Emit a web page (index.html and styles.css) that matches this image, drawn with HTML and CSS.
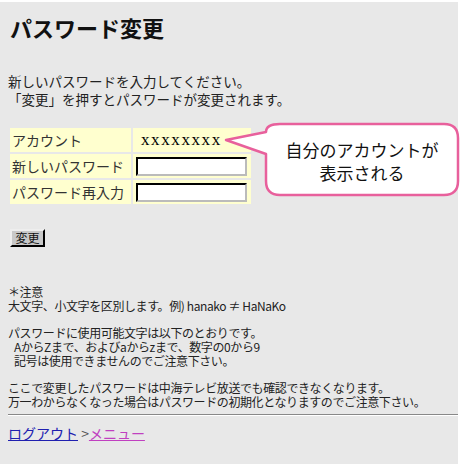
FILE: index.html
```html
<!DOCTYPE html>
<html lang="ja">
<head>
  <meta charset="UTF-8" />
  <title>パスワード変更</title>
  <link rel="stylesheet" href="styles.css">
</head>
<body>
  <div class="page">
    <h1 class="title">パスワード変更</h1>
    <p class="lead">新しいパスワードを入力してください。<br>「変更」を押すとパスワードが変更されます。</p>

    <form class="pw-form" onsubmit="return false;">
      <table class="pw-table">
        <tr>
          <td class="label">アカウント</td>
          <td class="value account">xxxxxxxx</td>
        </tr>
        <tr>
          <td class="label">新しいパスワード</td>
          <td class="value"><input class="pw-input" type="password"></td>
        </tr>
        <tr>
          <td class="label">パスワード再入力</td>
          <td class="value"><input class="pw-input" type="password"></td>
        </tr>
      </table>
      <button class="btn" type="submit">変更</button>
    </form>

    <div class="notes">
      <p>＊注意<br>大文字、小文字を区別します。例) hanako ≠ HaNaKo</p>
      <p>パスワードに使用可能文字は以下のとおりです。<br>
        <span class="indent">AからZまで、およびaからzまで、数字の0から9</span><br>
        <span class="indent">記号は使用できませんのでご注意下さい。</span></p>
      <p>ここで変更したパスワードは中海テレビ放送でも確認できなくなります。<br>万一わからなくなった場合はパスワードの初期化となりますのでご注意下さい。</p>
    </div>

    <hr class="rule">

    <div class="nav">
      <a class="link-logout" href="#">ログアウト</a> &gt;<a class="link-menu" href="#">メニュー</a>
    </div>

    <div class="callout">
      <svg class="callout-shape" width="238" height="78" viewBox="0 0 238 78">
        <path d="M2 18 L42 10 Q42 2 56 2 L220 2 Q234 2 234 16 L234 59 Q234 73 220 73 L56 73 Q42 73 42 59 L42 32 Z"
              fill="#fff" stroke="#e8609c" stroke-width="2.5" stroke-linejoin="round"/>
      </svg>
      <div class="callout-text">自分のアカウントが<br>表示される</div>
    </div>
  </div>
</body>
</html>
```

FILE: styles.css
```css
* {
    box-sizing: border-box;
}
html {
    background: #fff;
}
body {
    margin: 0;
    font-family: "Noto Sans CJK JP", "Noto Sans", sans-serif;
    color: #111;
}

.page {
    position: relative;
    width: 458px;
    height: 464px;
    margin-top: 2px;
    padding: 1px 0 0 8px;
    background: #e8e8e8;
}

.title {
    margin: 10px 0 0 2px;
    font-size: 22px;
    font-weight: bold;
    line-height: 29px;
    color: #111;
}

.lead {
    margin: 30px 0 0 0;
    font-size: 13.5px;
    line-height: 18px;
    color: #222;
}

.pw-form {
    margin-top: 18px;
}

.pw-table {
    border-spacing: 2px;
    margin-left: 0;
}
.pw-table td {
    height: 24px;
    padding: 0;
    background: #ffffcf;
    font-size: 14px;
    color: #333;
}
.label {
    width: 121px;
    padding-left: 2px !important;
}
.value {
    width: 118px;
    padding-left: 3px !important;
}
.account {
    font-family: "Liberation Serif", serif;
    font-size: 17px !important;
    letter-spacing: 1.6px;
    color: #000 !important;
    padding-left: 8px !important;
}

.pw-input {
    display: block;
    width: 111px;
    height: 19px;
    margin: 0;
    border: 2px inset #bbb;
    border-top-color: #555;
    border-left-color: #555;
    background: #fff;
}

.btn {
    display: block;
    margin: 23px 0 0 2px;
    width: 35px;
    height: 18px;
    padding: 0;
    font-family: "Noto Sans CJK JP", sans-serif;
    font-size: 12px;
    line-height: 14px;
    color: #111;
    background: #c8c8c8;
    border: 2px outset #eee;
    border-right-color: #333;
    border-bottom-color: #333;
}

.notes {
    margin-top: 38px;
    font-size: 12px;
    line-height: 14px;
    letter-spacing: -0.4px;
    color: #222;
}
.notes p {
    margin: 0 0 13px 0;
}
.notes p:last-child {
    margin-bottom: 0;
}
.indent {
    padding-left: 6px;
}

.rule {
    margin: 5px 0 0 0;
    width: 450px;
    border: none;
    border-top: 1px solid #888;
    border-bottom: 1px solid #fff;
}

.nav {
    margin-top: 7px;
    font-size: 14px;
    line-height: 20px;
    color: #555;
}
.link-logout {
    color: #2020b0;
}
.link-menu {
    color: #c040c0;
}

.callout {
    position: absolute;
    left: 224px;
    top: 120px;
    width: 238px;
    height: 78px;
}
.callout-shape {
    position: absolute;
    left: 0;
    top: 0;
}
.callout-text {
    position: relative;
    padding: 16px 0 0 42px;
    width: 234px;
    text-align: center;
    font-size: 17px;
    line-height: 23px;
    color: #111;
}
```
